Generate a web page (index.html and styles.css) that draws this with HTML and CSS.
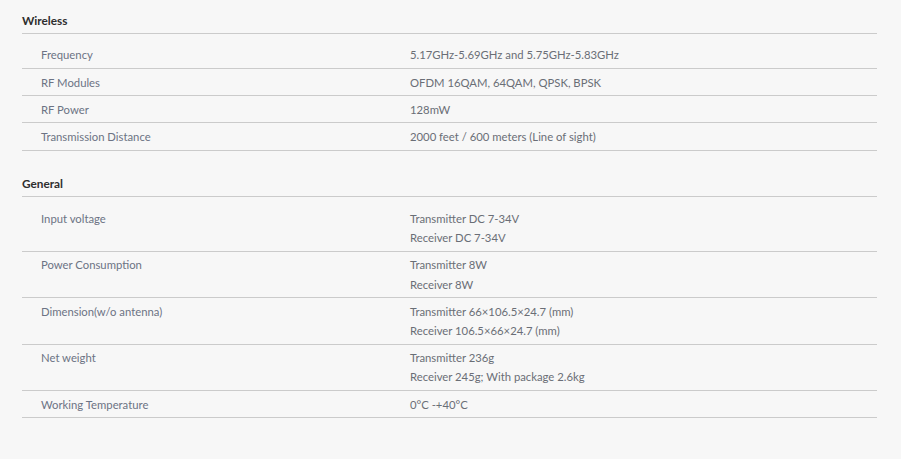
FILE: index.html
```html
<!DOCTYPE html>
<html lang="en">
<head>
<meta charset="utf-8">
<title>Specifications</title>
<link rel="stylesheet" href="styles.css">
</head>
<body>
<div class="specs">
  <section class="group">
    <h3 class="group-title">Wireless</h3>
    <div class="row">
      <div class="label">Frequency</div>
      <div class="value">5.17GHz-5.69GHz and 5.75GHz-5.83GHz</div>
    </div>
    <div class="row">
      <div class="label">RF Modules</div>
      <div class="value">OFDM 16QAM, 64QAM, QPSK, BPSK</div>
    </div>
    <div class="row">
      <div class="label">RF Power</div>
      <div class="value">128mW</div>
    </div>
    <div class="row">
      <div class="label">Transmission Distance</div>
      <div class="value">2000 feet / 600 meters (Line of sight)</div>
    </div>
  </section>
  <section class="group">
    <h3 class="group-title">General</h3>
    <div class="row">
      <div class="label">Input voltage</div>
      <div class="value">Transmitter DC 7-34V<br>Receiver DC 7-34V</div>
    </div>
    <div class="row">
      <div class="label">Power Consumption</div>
      <div class="value">Transmitter 8W<br>Receiver 8W</div>
    </div>
    <div class="row">
      <div class="label">Dimension(w/o antenna)</div>
      <div class="value">Transmitter 66×106.5×24.7 (mm)<br>Receiver 106.5×66×24.7 (mm)</div>
    </div>
    <div class="row">
      <div class="label">Net weight</div>
      <div class="value">Transmitter 236g<br>Receiver 245g; With package 2.6kg</div>
    </div>
    <div class="row">
      <div class="label">Working Temperature</div>
      <div class="value">0°C -+40°C</div>
    </div>
  </section>
</div>
</body>
</html>
```
FILE: styles.css
```css
html, body {
  margin: 0;
  padding: 0;
  background: #f7f7f7;
}
body {
  font-family: Lato, "Liberation Sans", Arial, sans-serif;
  font-size: 11.3px;
  color: #6b707a;
}
.specs {
  padding: 10px 24px 0 22px;
}
.group + .group {
  margin-top: 23px;
}
.group-title {
  margin: 0;
  font-size: 11.8px;
  font-weight: 700;
  line-height: 19.2px;
  padding-top: 0.6px;
  padding-bottom: 3px;
  color: #2e2e2e;
  border-bottom: 1px solid #cbcbcb;
}
.row {
  display: grid;
  grid-template-columns: 388px 1fr;
  padding: 3.5px 0;
  line-height: 19.2px;
  border-bottom: 1px solid #cbcbcb;
}
.group-title + .row {
  padding-top: 11.5px;
}
.label {
  padding-left: 19px;
  color: #6c7384;
}
.value {
  color: #6a6e76;
}
```
